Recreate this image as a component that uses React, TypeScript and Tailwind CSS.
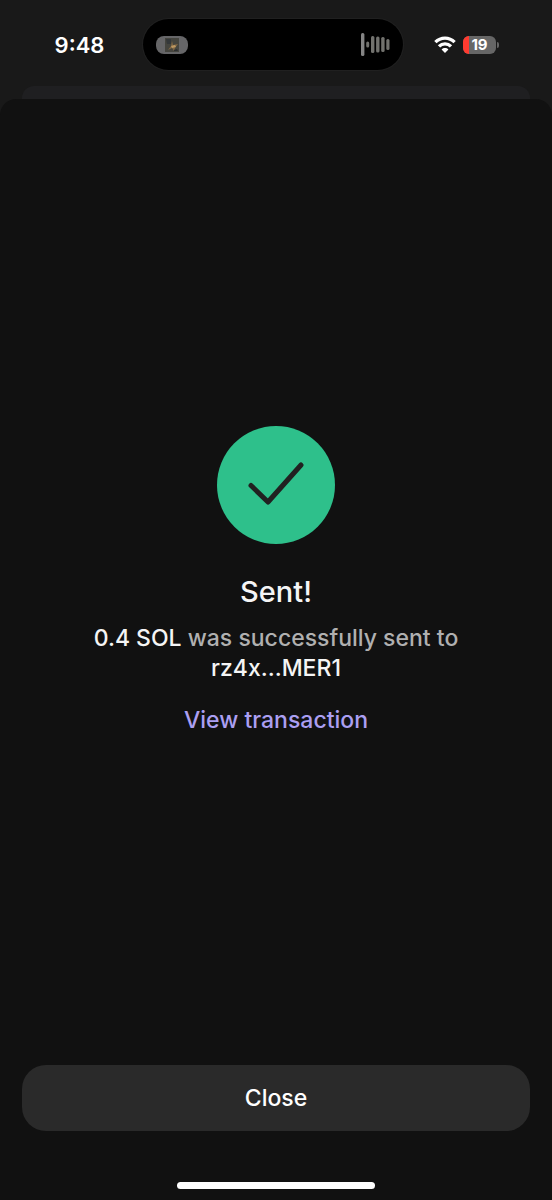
function WaveformIcon() {
  return (
    <svg className="w-[29px] h-6" viewBox="0 0 29 24" fill="#72726e" aria-hidden="true">
      <rect x="0" y="0" width="3.4" height="23" rx="1.5" fill="#858585" />
      <rect x="5.2" y="8.5" width="3" height="6" rx="1.5" />
      <rect x="10" y="3" width="3.4" height="17" rx="1.5" />
      <rect x="15.1" y="3.5" width="3.4" height="16" rx="1.5" />
      <rect x="20.2" y="4" width="3.4" height="15" rx="1.5" />
      <rect x="25.3" y="6" width="3.2" height="11" rx="1.5" />
    </svg>
  );
}

function WifiIcon() {
  return (
    <svg className="w-[22px] h-[17px]" viewBox="0 0 22 17" fill="none" stroke="#fff" strokeWidth="3.3" aria-hidden="true">
      <path d="M1.4 6.2C6.8 .7 15.2 .7 20.6 6.2" />
      <path d="M5 10.4C8.4 7 13.6 7 17 10.4" />
      <path d="M11 17 7.6 13.4C9.5 11.6 12.5 11.6 14.4 13.4Z" fill="#fff" stroke="none" />
    </svg>
  );
}

function Battery({ level }: { level: number }) {
  return (
    <div className="flex items-center gap-px">
      <div className="relative w-[33px] h-[18px] rounded-md bg-[#666] overflow-hidden">
        <div className="absolute inset-y-0 left-0 bg-[#ff3b30]" style={{ width: `${level}%` }} />
        <span className="absolute inset-0 text-center text-[15px] leading-[18px] font-bold text-white">
          {level}
        </span>
      </div>
      <div className="w-0.5 h-1.5 rounded-r-full bg-[#666]" />
    </div>
  );
}

function StatusBar() {
  return (
    <header className="grid grid-cols-[1fr_260px_1fr] items-center pt-[19px] pb-4 pr-1.5">
      <div className="pl-4 text-center text-[22px] leading-7 font-semibold text-white">9:48</div>
      <div className="flex items-center justify-between h-[51px] px-[13px] rounded-full bg-black ring-1 ring-[#202020]">
        <div className="flex justify-center items-center w-8 h-[18px] rounded-lg bg-[#666668]">
          <svg className="w-3.5 h-3.5" viewBox="0 0 14 14" aria-hidden="true">
            <rect width="14" height="14" fill="#45453f" />
            <path d="M1 1h5v5H2z" fill="#34383a" />
            <path d="M7 3l1 4 5-1-3 4-1 3-2-3-4 2 3-4z" fill="#806744" />
            <path d="M6 8l4-1 1 2-4 1z" fill="#bd9863" />
            <path d="M9 12l3-1 1 2H9z" fill="#2c2f31" />
          </svg>
        </div>
        <WaveformIcon />
      </div>
      <div className="flex items-center justify-center gap-[7px] pr-4">
        <WifiIcon />
        <Battery level={19} />
      </div>
    </header>
  );
}

export default function App() {
  return (
    <div className="flex flex-col min-h-screen bg-[#191919] font-['Inter',sans-serif] font-medium">
      <StatusBar />

      {/* Edge of the sheet underneath */}
      <div className="mx-[22px] h-[13px] rounded-t-xl bg-[#1f1f21]" />

      <div className="flex flex-col flex-1 rounded-t-2xl bg-[#111]">
        <main className="flex flex-col flex-1 items-center justify-center px-[22px] pb-1 text-center">
          <svg className="w-[118px] h-[118px]" viewBox="0 0 118 118" fill="none" aria-hidden="true">
            <circle cx="59" cy="59" r="59" fill="#2ec08b" />
            <path
              d="M34 59.5 51 76 84 39"
              stroke="#212121"
              strokeWidth="5"
              strokeLinecap="round"
              strokeLinejoin="round"
            />
          </svg>
          <h1 className="mt-[30px] text-[29px] leading-9 text-[#f5f5f5]">Sent!</h1>
          <p className="mt-[13px] max-w-96 text-[23px] leading-[30px] text-[#b0b0b0]">
            <span className="text-[#f5f5f5]">0.4 SOL</span> was successfully sent to{" "}
            <span className="text-[#f5f5f5]">rz4x...MER1</span>
          </p>
          <a href="#transaction" className="mt-[22px] text-[23px] leading-[30px] text-[#ab9ff2]">
            View transaction
          </a>
        </main>

        <footer className="flex flex-col items-center px-[22px] pb-[11px]">
          <button type="button" className="w-full h-[66px] rounded-3xl bg-[#2a2a2a] text-[23px] text-white">
            Close
          </button>
          <div className="mt-[51px] w-[198px] h-[7px] rounded-full bg-white" />
        </footer>
      </div>
    </div>
  );
}
